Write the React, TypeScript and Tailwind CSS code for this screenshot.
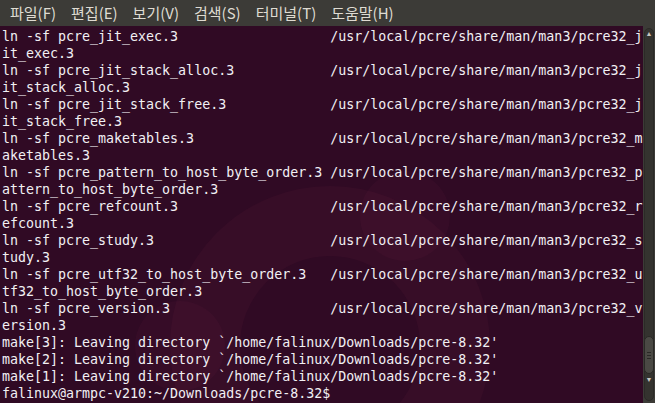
import React from "react";

const menus = ["파일(F)", "편집(E)", "보기(V)", "검색(S)", "터미널(T)", "도움말(H)"];

const pad = (s: string) => s.padEnd(41, " ");
const path = "/usr/local/pcre/share/man/man3/pcre32_";

const links: [string, string, string][] = [
  ["pcre_jit_exec.3", "j", "it_exec.3"],
  ["pcre_jit_stack_alloc.3", "j", "it_stack_alloc.3"],
  ["pcre_jit_stack_free.3", "j", "it_stack_free.3"],
  ["pcre_maketables.3", "m", "aketables.3"],
  ["pcre_pattern_to_host_byte_order.3", "p", "attern_to_host_byte_order.3"],
  ["pcre_refcount.3", "r", "efcount.3"],
  ["pcre_study.3", "s", "tudy.3"],
  ["pcre_utf32_to_host_byte_order.3", "u", "tf32_to_host_byte_order.3"],
  ["pcre_version.3", "v", "ersion.3"],
];

const lines: string[] = [
  ...links.flatMap(([src, c, rest]) => [pad(`ln -sf ${src}`) + path + c, rest]),
  "make[3]: Leaving directory `/home/falinux/Downloads/pcre-8.32'",
  "make[2]: Leaving directory `/home/falinux/Downloads/pcre-8.32'",
  "make[1]: Leaving directory `/home/falinux/Downloads/pcre-8.32'",
  "falinux@armpc-v210:~/Downloads/pcre-8.32$",
];

export default function App() {
  return (
    <div className="w-[655px] h-[403px] flex flex-col overflow-hidden bg-[#300a24]">
      <div
        className="h-[26px] shrink-0 flex items-center gap-[11px] px-2 bg-[#3c3b37] text-[#dfdbd2] text-[15px]"
        style={{ fontFamily: '"Noto Sans CJK KR", "Noto Sans", sans-serif' }}
      >
        {menus.map((m) => (
          <span key={m} className="px-[2px]">{m}</span>
        ))}
      </div>
      <div className="flex flex-1 min-h-0">
        <div className="relative flex-1 overflow-hidden">
          <svg className="absolute left-[120px] top-[110px]" width="420" height="420" viewBox="0 0 420 420">
            <g fill="none" stroke="#ff6699" strokeOpacity="0.035" strokeWidth="70">
              <circle cx="210" cy="210" r="125" />
            </g>
            <g fill="#ff6699" fillOpacity="0.03">
              <circle cx="60" cy="210" r="45" />
              <circle cx="285" cy="80" r="45" />
              <circle cx="285" cy="340" r="45" />
            </g>
          </svg>
          <pre
            className="relative m-0 pl-[2px] pt-[2px] text-[13.3px] leading-[17px] text-[#f2f0f4] whitespace-pre"
            style={{ fontFamily: '"DejaVu Sans Mono", "Noto Sans CJK KR", monospace' }}
          >
            {lines.join("\n")}
          </pre>
        </div>
        <div className="w-[12px] shrink-0 bg-[#3c3b37] flex flex-col items-center py-[2px]">
          <div className="w-[10px] flex-1 rounded-[5px] border border-[#2b2a27] bg-[#34332f] flex flex-col items-center">
            <span className="text-[7px] leading-[10px] text-[#c8c6c0]">▲</span>
            <div className="flex-1" />
            <div className="w-[10px] h-[38px] rounded-[5px] border border-[#2a2926] bg-[#4a4944] flex flex-col items-center justify-center gap-[2px]">
              <div className="w-[4px] h-px bg-[#2a2926]" />
              <div className="w-[4px] h-px bg-[#2a2926]" />
              <div className="w-[4px] h-px bg-[#2a2926]" />
            </div>
            <span className="text-[7px] leading-[12px] text-[#c8c6c0]">▼</span>
            <div className="h-[14px]" />
          </div>
        </div>
      </div>
    </div>
  );
}
